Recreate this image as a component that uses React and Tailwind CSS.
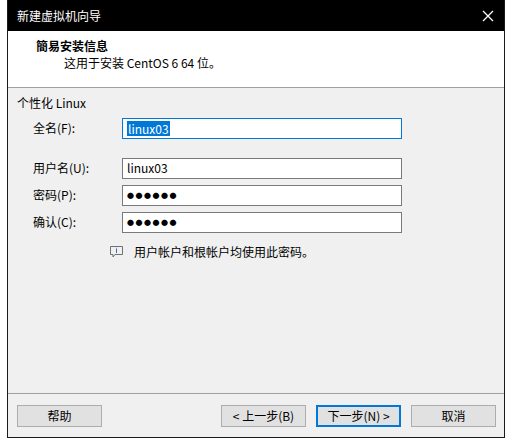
const font = { fontFamily: '"Noto Sans CJK SC", "Liberation Sans", sans-serif' };

function Field({ label, value, selected, dots }) {
  return (
    <div className="flex items-center h-[20px]">
      <div className="w-[114px] pl-[25px] text-[12px] text-black">{label}</div>
      <div
        className={
          "w-[280px] h-[21px] bg-white border flex items-center pl-[4px] " +
          (selected ? "border-[#0078d7]" : "border-[#7a7a7a]")
        }
      >
        {dots ? (
          <span className="text-[7px] tracking-[1.5px] text-black">●●●●●●</span>
        ) : selected ? (
          <span className="bg-[#0078d7] text-white text-[12px] leading-[15px] px-[1px]">{value}</span>
        ) : (
          <span className="text-[12px] text-black">{value}</span>
        )}
      </div>
    </div>
  );
}

function Btn({ children, primary }) {
  return (
    <div
      className={
        "w-[85px] h-[22px] bg-[#e1e1e1] flex items-center justify-center text-[12px] text-black " +
        (primary ? "border-2 border-[#0078d7]" : "border border-[#adadad]")
      }
    >
      {children}
    </div>
  );
}

export default function App() {
  return (
    <div className="w-[513px] h-[440px] bg-white" style={font}>
      <div className="ml-[7px] w-[498px] h-[438px] border border-[#1b1b1b] border-t-0 flex flex-col bg-[#f0f0f0]">
        <div className="h-[31px] bg-black text-white text-[12px] flex items-center justify-between pl-[9px] pr-[10px]">
          <span>新建虚拟机向导</span>
          <svg width="12" height="12" viewBox="0 0 12 12">
            <path d="M1 1L11 11M11 1L1 11" stroke="white" strokeWidth="1.3" />
          </svg>
        </div>
        <div className="h-[57px] bg-white border-b border-[#a0a0a0] pl-[28px] pt-[7px]">
          <div className="text-[12px] font-bold text-black leading-[16px]">簡易安装信息</div>
          <div className="text-[12px] text-black pl-[28px] leading-[18px]">这用于安装 CentOS 6 64 位。</div>
        </div>
        <div className="flex-1 pt-[6px]">
          <div className="text-[12px] pl-[9px] leading-[18px]">个性化 Linux</div>
          <div className="mt-[6px]">
            <Field label="全名(F):" value="linux03" selected />
          </div>
          <div className="mt-[20px] flex flex-col gap-[7px]">
            <Field label="用户名(U):" value="linux03" />
            <Field label="密码(P):" dots />
            <Field label="确认(C):" dots />
          </div>
          <div className="mt-[11px] pl-[102px] flex items-center gap-[11px] text-[12px]">
            <svg width="13" height="12" viewBox="0 0 13 12">
              <path d="M0.5 0.5H12.5V8.5H5L3 11V8.5H0.5Z" fill="none" stroke="#707070" />
              <path d="M6.5 3V7" stroke="#3070c0" />
              <path d="M6.5 1.8V2.6" stroke="#3070c0" />
            </svg>
            <span>用户帐户和根帐户均使用此密码。</span>
          </div>
        </div>
        <div className="h-[44px] border-t border-[#a0a0a0] flex items-center pl-[9px] pr-[8px]">
          <Btn>帮助</Btn>
          <div className="flex-1" />
          <div className="flex gap-[10px]">
            <Btn>&lt; 上一步(B)</Btn>
            <Btn primary>下一步(N) &gt;</Btn>
            <Btn>取消</Btn>
          </div>
        </div>
      </div>
    </div>
  );
}
